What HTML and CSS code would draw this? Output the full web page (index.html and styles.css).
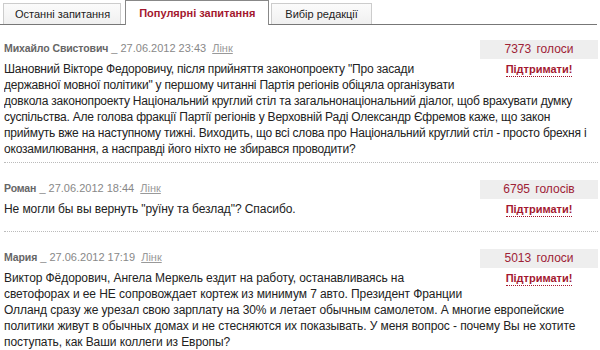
FILE: index.html
```html
<!DOCTYPE html>
<html lang="uk">
<head>
<meta charset="utf-8">
<link rel="stylesheet" href="styles.css">
</head>
<body>
<div class="page">
  <div class="tabs">
    <div class="tab first">Останні запитання</div>
    <div class="tab active">Популярні запитання</div>
    <div class="tab">Вибір редакції</div>
  </div>
  <div class="list">
    <div class="item">
      <div class="side">
        <div class="votes">7373 голоси</div>
        <a class="support">Підтримати!</a>
      </div>
      <div class="meta"><span class="author">Михайло Свистович</span> _ 27.06.2012 23:43 <a class="link">Лінк</a></div>
      <p class="text">Шановний Вікторе Федоровичу, після прийняття законопроекту "Про засади державної мовної політики" у першому читанні Партія регіонів обіцяла організувати довкола законопроекту Національний круглий стіл та загальнонаціональний діалог, щоб врахувати думку суспільства. Але голова фракції Партії регіонів у Верховній Раді Олександр Єфремов каже, що закон приймуть вже на наступному тижні. Виходить, що всі слова про Національний круглий стіл - просто брехня і окозамилювання, а насправді його ніхто не збирався проводити?</p>
    </div>
    <div class="item">
      <div class="side">
        <div class="votes">6795 голосів</div>
        <a class="support">Підтримати!</a>
      </div>
      <div class="meta"><span class="author">Роман</span> _ 27.06.2012 18:44 <a class="link">Лінк</a></div>
      <p class="text ru" lang="ru">Не могли бы вы вернуть "руїну та безлад"? Спасибо.</p>
    </div>
    <div class="item">
      <div class="side">
        <div class="votes">5013 голоси</div>
        <a class="support">Підтримати!</a>
      </div>
      <div class="meta"><span class="author">Мария</span> _ 27.06.2012 17:19 <a class="link">Лінк</a></div>
      <p class="text ru" lang="ru">Виктор Фёдорович, Ангела Меркель ездит на работу, останавливаясь на светофорах и ее НЕ сопровождает кортеж из минимум 7 авто. Президент Франции Олланд сразу же урезал свою зарплату на 30% и летает обычным самолетом. А многие европейские политики живут в обычных домах и не стесняются их показывать. У меня вопрос - почему Вы не хотите поступать, как Ваши коллеги из Европы?</p>
    </div>
  </div>
</div>
</body>
</html>
```
FILE: styles.css
```css
html, body {
  margin: 0;
  padding: 0;
  background: #fff;
}
body {
  font-family: "Liberation Sans", Arial, sans-serif;
  font-size: 12px;
  color: #222;
}
.page {
  width: 600px;
}
.tabs {
  display: flex;
  align-items: flex-end;
  padding-left: 3px;
  height: 24px;
  border-bottom: 1px solid #777;
  margin-right: 3px;
}
.tab {
  height: 21px;
  line-height: 21px;
  padding: 0 13px;
  font-size: 11px;
  color: #222;
  background: linear-gradient(#fbfbfb, #f0f0f0);
  border: 1px solid #ccc;
  border-bottom: none;
  box-sizing: border-box;
  margin-right: 2px;
}
.tab.first {
  padding: 0 10px 0 11px;
  margin-right: 4px;
}
.tab.active {
  height: 25px;
  line-height: 25px;
  margin-bottom: -1px;
  background: #fff;
  border-color: #888;
  color: #a3182f;
  font-weight: bold;
  padding: 0 13px;
}
.list {
  padding: 0 2px 0 4px;
}
.item {
  padding: 15px 0 5px;
  border-bottom: 1px dotted #bbb;
  overflow: hidden;
}
.item + .item {
  padding-top: 17px;
}
.side {
  float: right;
  width: 118px;
  height: 46px;
  margin-left: 14px;
  text-align: center;
}
.votes {
  height: 19px;
  line-height: 19px;
  background: #eeeeee;
  color: #9e2236;
  font-size: 12px;
  word-spacing: 2px;
}
.support {
  display: inline-block;
  margin-top: 3px;
  font-size: 11px;
  font-weight: bold;
  color: #a3182f;
  line-height: 14px;
  border-bottom: 1px dotted #a3182f;
}
.meta {
  font-size: 11px;
  line-height: 16px;
  color: #888;
}
.author {
  font-weight: bold;
  color: #666;
  font-size: 10.5px;
  letter-spacing: -0.1px;
}
.link {
  color: #999;
  text-decoration: underline;
  margin-left: 3px;
}
.text {
  margin: 5px 0 0;
  line-height: 16px;
  font-size: 12px;
  letter-spacing: -0.2px;
  color: #222;
}
.text.ru {
  letter-spacing: -0.08px;
}
```
